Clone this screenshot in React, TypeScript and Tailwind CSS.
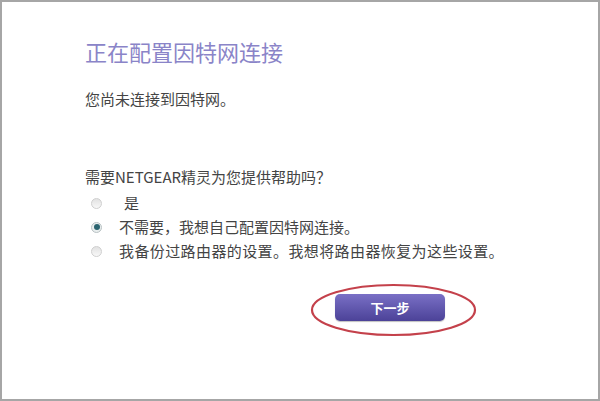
import React from "react";

const options = [
  { id: "yes", label: "是", indent: true },
  { id: "no", label: "不需要，我想自己配置因特网连接。", checked: true },
  { id: "restore", label: "我备份过路由器的设置。我想将路由器恢复为这些设置。", wide: true },
];

function Radio({ checked }: { checked?: boolean }) {
  if (checked) {
    return (
      <span className="flex h-[11px] w-[11px] items-center justify-center rounded-full border border-[#b9c2c4] bg-[#e9eeee]">
        <span className="h-[6px] w-[6px] rounded-full bg-[#2b6470]" />
      </span>
    );
  }
  return (
    <span className="h-[11px] w-[11px] rounded-full border border-[#cfcfcf] bg-gradient-to-b from-[#e2e2e2] to-[#f8f8f8]" />
  );
}

export default function App() {
  return (
    <div
      className="h-[401px] w-[600px] border-2 border-[#a6a6a6] bg-white pl-[83px] pt-[34px] text-[#444]"
      style={{ fontFamily: '"Noto Sans CJK SC", "Noto Sans", sans-serif' }}
    >
      <h1 className="text-[22px] leading-[30px] text-[#8a84c8]">正在配置因特网连接</h1>
      <p className="mt-[22px] text-[15px] leading-[22px]">您尚未连接到因特网。</p>

      <p className="mt-[56px] text-[15px] leading-[22px]">需要NETGEAR精灵为您提供帮助吗？</p>
      <div className="mt-[3px]">
        {options.map((o) => (
          <label key={o.id} className="flex h-[24px] items-center text-[15px]">
            <span className="ml-[6px] mr-[17px] flex">
              <Radio checked={o.checked} />
            </span>
            <span className={(o.indent ? "ml-[5px] " : "") + (o.wide ? "tracking-[0.4px]" : "")}>
              {o.label}
            </span>
          </label>
        ))}
      </div>

      <div className="relative ml-[250px] mt-[31px] w-[110px]">
        <button className="h-[27px] w-[110px] rounded-[5px] bg-gradient-to-b from-[#7a70c6] to-[#4c4298] text-[13px] font-bold text-white shadow-[0_1px_1px_rgba(0,0,0,0.25)]">
          下一步
        </button>
        <svg
          className="pointer-events-none absolute left-[-25px] top-[-11px]"
          width="167"
          height="54"
          viewBox="0 0 167 54"
        >
          <ellipse cx="83.5" cy="27" rx="81.5" ry="25" fill="none" stroke="#c4414b" strokeWidth="2.2" />
        </svg>
      </div>
    </div>
  );
}
